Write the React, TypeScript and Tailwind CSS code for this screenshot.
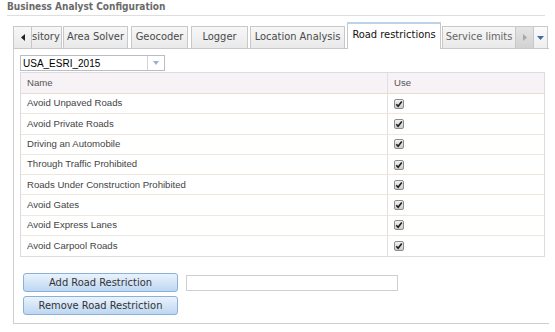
import React from 'react';

const condensed = "font-['DejaVu_Sans_Condensed','DejaVu_Sans',sans-serif] font-stretch-condensed";

// rows of the road restrictions grid
const restrictions = [
  'Avoid Unpaved Roads',
  'Avoid Private Roads',
  'Driving an Automobile',
  'Through Traffic Prohibited',
  'Roads Under Construction Prohibited',
  'Avoid Gates',
  'Avoid Express Lanes',
  'Avoid Carpool Roads',
];

const tabs = [
  { label: 'Area Solver', w: 'w-[65px]', ml: 'ml-[1px]' },
  { label: 'Geocoder', w: 'w-[57px]', ml: 'ml-[3px]' },
  { label: 'Logger', w: 'w-[57px]', ml: 'ml-[3px]' },
  { label: 'Location Analysis', w: 'w-[95px]', ml: 'ml-[2px]' },
];

function CheckMark() {
  return (
    <svg width="10" height="10" viewBox="0 0 10 10">
      <defs>
        <linearGradient id="cbg" x1="0" y1="0" x2="0" y2="1">
          <stop offset="0" stopColor="#f4f4f4" />
          <stop offset="1" stopColor="#c9c9c9" />
        </linearGradient>
      </defs>
      <rect x="0.5" y="0.5" width="9" height="9" rx="1.5" fill="url(#cbg)" stroke="#8c8c8c" />
      <path d="M2.3 5.2 L4.1 7.2 L7.8 2.4" fill="none" stroke="#1e1e1e" strokeWidth="1.6" />
    </svg>
  );
}

export default function App() {
  return (
    <div className="w-[555px] h-[332px] bg-white overflow-hidden relative">
      {/* title */}
      <div className={`ml-[7px] w-[538px] h-[16px] border-b border-[#dedede] text-[10px] leading-[12px] pt-[1px] font-bold text-[#6a6a6a] ${condensed}`}>
        Business Analyst Configuration
      </div>

      {/* tab strip */}
      <div className={`mt-[6px] ml-[13px] w-[536px] h-[27px] flex items-end border-b border-[#c8c8c8] text-[11px] ${condensed}`}>
        <div className="w-[49px] h-[22px] flex border border-b-0 border-[#c8c8c8] bg-gradient-to-b from-[#f7f7f7] to-[#e9e9e9]">
          <div className="w-[18px] shrink-0 border-r border-[#c8c8c8] flex items-center justify-center">
            <svg width="4" height="7" viewBox="0 0 4 7"><path d="M4 0 L0 3.5 L4 7 Z" fill="#222" /></svg>
          </div>
          <div className="flex-1 flex justify-end items-center pr-[2px] text-[#4a4a4a]">
            <span>sitory</span>
          </div>
        </div>
        {tabs.map((t) => (
          <div
            key={t.label}
            className={`${t.w} ${t.ml} h-[22px] flex items-center justify-center border border-b-0 border-[#c8c8c8] bg-gradient-to-b from-[#f7f7f7] to-[#e9e9e9] text-[#4a4a4a]`}
          >
            {t.label}
          </div>
        ))}
        <div className="w-[94px] ml-[2px] h-[27px] -mb-px flex items-center justify-center border border-b-0 border-[#c8c8c8] border-t-2 border-t-[#bcd3ea] bg-white text-[#111] pb-[2px]">
          Road restrictions
        </div>
        <div className="w-[74px] ml-[1px] h-[22px] flex items-center justify-center border border-b-0 border-[#c8c8c8] bg-gradient-to-b from-[#f7f7f7] to-[#e9e9e9] text-[#666]">
          Service limits
        </div>
        <div className="w-[18px] h-[22px] flex items-center justify-center border border-b-0 border-l-0 border-[#c8c8c8] bg-gradient-to-b from-[#e4e4e4] to-[#d2d2d2]">
          <svg width="4" height="7" viewBox="0 0 4 7"><path d="M0 0 L4 3.5 L0 7 Z" fill="#a8a8a8" /></svg>
        </div>
        <div className="w-[14px] h-[22px] flex items-center justify-center border border-b-0 border-l-0 border-[#c8c8c8] bg-gradient-to-b from-[#fbfbfb] to-[#eeeeee]">
          <svg width="7" height="4" viewBox="0 0 7 4"><path d="M0 0 L7 0 L3.5 4 Z" fill="#3f6ca3" /></svg>
        </div>
      </div>

      {/* panel */}
      <div className="ml-[13px] w-[536px] h-[275px] border-l border-b border-[#cfcfcf] pt-[6px] pl-[6px]">
        {/* select */}
        <div className="w-[145px] h-[16px] flex border border-[#b8bec8] bg-white">
          <div className="flex-1 flex items-center pl-[2px] text-[10px] text-black font-['Liberation_Sans',Arial,sans-serif]">
            USA_ESRI_2015
          </div>
          <div className="w-[17px] border-l border-[#d2d6dc] flex items-center justify-center">
            <svg width="6" height="4" viewBox="0 0 6 4"><path d="M0 0 L6 0 L3 4 Z" fill="#9fb0c8" /></svg>
          </div>
        </div>

        {/* grid */}
        <div className="mt-[1px] w-[525px] border border-[#dcdcdc] text-[9.6px] text-[#444] font-['Liberation_Sans',Arial,sans-serif]">
          <div className="h-[21px] flex bg-[#f7f2f5] border-b border-[#eadccd] text-[#555]">
            <div className="w-[367px] border-r border-[#e6dede] flex items-center pl-[6px]">Name</div>
            <div className="flex-1 flex items-center pl-[6px]">Use</div>
          </div>
          {restrictions.map((r, i) => (
            <div key={r} className={`h-[20.3px] flex ${i < restrictions.length - 1 ? 'border-b border-[#efe6dd]' : ''}`}>
              <div className="w-[367px] border-r border-[#e6dede] flex items-center pl-[6px]">{r}</div>
              <div className="flex-1 flex items-center pl-[6px]">
                <CheckMark />
              </div>
            </div>
          ))}
        </div>

        {/* buttons */}
        <div className={`mt-[16px] ml-[3px] flex flex-col gap-[4px] text-[11px] text-[#333] ${condensed}`}>
          <div className="flex items-center gap-[8px]">
            <button className="w-[155px] h-[19px] rounded-[3px] border border-[#8cb0d8] bg-gradient-to-b from-[#eaf3fd] to-[#bdd7f2] flex items-center justify-center">
              Add Road Restriction
            </button>
            <input className="w-[212px] h-[16px] border border-[#cfcfcf] bg-white outline-none" />
          </div>
          <button className="w-[155px] h-[19px] rounded-[3px] border border-[#8cb0d8] bg-gradient-to-b from-[#eaf3fd] to-[#bdd7f2] flex items-center justify-center">
            Remove Road Restriction
          </button>
        </div>
      </div>
    </div>
  );
}
